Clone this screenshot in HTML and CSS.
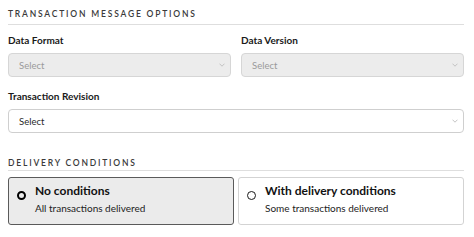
FILE: index.html
```html
<!DOCTYPE html>
<html lang="en">
<head>
<meta charset="UTF-8" />
<meta name="viewport" content="width=device-width, initial-scale=1" />
<title>Transaction Options</title>
<link rel="stylesheet" href="styles.css">
</head>
<body>

<div class="form">
  <h2 class="section-title first">Transaction Message Options</h2>

  <div class="row">
    <div class="field">
      <label>Data Format</label>
      <div class="select disabled">
        <span>Select</span>
        <svg class="chevron" width="6" height="4" viewBox="0 0 6 4"><path d="M0.5 0.7 L3 3.2 L5.5 0.7" fill="none" stroke="currentColor" stroke-width="0.9"/></svg>
      </div>
    </div>
    <div class="field">
      <label>Data Version</label>
      <div class="select disabled">
        <span>Select</span>
        <svg class="chevron" width="6" height="4" viewBox="0 0 6 4"><path d="M0.5 0.7 L3 3.2 L5.5 0.7" fill="none" stroke="currentColor" stroke-width="0.9"/></svg>
      </div>
    </div>
  </div>

  <div class="field wide">
    <label>Transaction Revision</label>
    <div class="select">
      <span>Select</span>
      <svg class="chevron" width="6" height="4" viewBox="0 0 6 4"><path d="M0.5 0.7 L3 3.2 L5.5 0.7" fill="none" stroke="currentColor" stroke-width="0.9"/></svg>
    </div>
  </div>

  <h2 class="section-title second">Delivery Conditions</h2>

  <div class="options">
    <div class="option selected">
      <span class="radio"></span>
      <div class="option-text">
        <div class="option-title">No conditions</div>
        <div class="option-desc">All transactions delivered</div>
      </div>
    </div>
    <div class="option">
      <span class="radio"></span>
      <div class="option-text">
        <div class="option-title">With delivery conditions</div>
        <div class="option-desc">Some transactions delivered</div>
      </div>
    </div>
  </div>
</div>

</body>
</html>
```

FILE: styles.css
```css
/* Base */
body {
  font-family: Lato, 'Open Sans', sans-serif;
  color: #1e1e1e;
  background: #fff;
  margin: 0;
  padding: 8px 10px 0 8px;
}

/* Section headings */
.section-title {
  margin: 0;
  font-size: 8.5px;
  line-height: 12px;
  font-weight: 600;
  letter-spacing: 1.8px;
  text-transform: uppercase;
  color: #3a3a3a;
  border-bottom: 1px solid #dedede;
}
.section-title.first {
  padding-bottom: 4px;
}
.section-title.second {
  margin-top: 24px;
  padding-bottom: 1px;
}

/* Fields */
.row {
  display: grid;
  grid-template-columns: 1fr 1fr;
  gap: 10px;
  margin-top: 9px;
}
.field label {
  display: block;
  font-size: 10px;
  line-height: 12px;
  font-weight: 700;
  color: #1a1a1a;
  margin-bottom: 7px;
}
.field.wide {
  margin-top: 13px;
}
.select {
  box-sizing: border-box;
  height: 24px;
  display: flex;
  align-items: center;
  justify-content: space-between;
  padding: 0 5px 0 10px;
  border: 1px solid #cfcfcf;
  border-radius: 4px;
  background: #fff;
  font-size: 9.5px;
  color: #2a2a2a;
}
.select.disabled {
  background: #ececec;
  color: #9a9a9a;
  border-color: #d6d6d6;
}
.chevron {
  color: #bdbdbd;
}

/* Delivery options */
.options {
  display: grid;
  grid-template-columns: 1fr 1fr;
  gap: 4px;
  margin-top: 6px;
}
.option {
  box-sizing: border-box;
  height: 48px;
  display: flex;
  align-items: flex-start;
  gap: 9px;
  padding: 6px 8px 0 8px;
  border: 1px solid #d3d3d3;
  border-radius: 3px;
  background: #fff;
}
.option.selected {
  background: #ebebeb;
  border-color: #5a5a5a;
}
.radio {
  box-sizing: border-box;
  flex: none;
  width: 9px;
  height: 9px;
  margin-top: 7px;
  border: 1.5px solid #1a1a1a;
  border-radius: 50%;
}
.option.selected .radio {
  border-width: 2.6px;
  border-color: #000;
}
.option-title {
  font-size: 12px;
  line-height: 14px;
  font-weight: 700;
  color: #111;
}
.option-desc {
  margin-top: 4px;
  font-size: 10px;
  line-height: 12px;
  color: #222;
}
```
